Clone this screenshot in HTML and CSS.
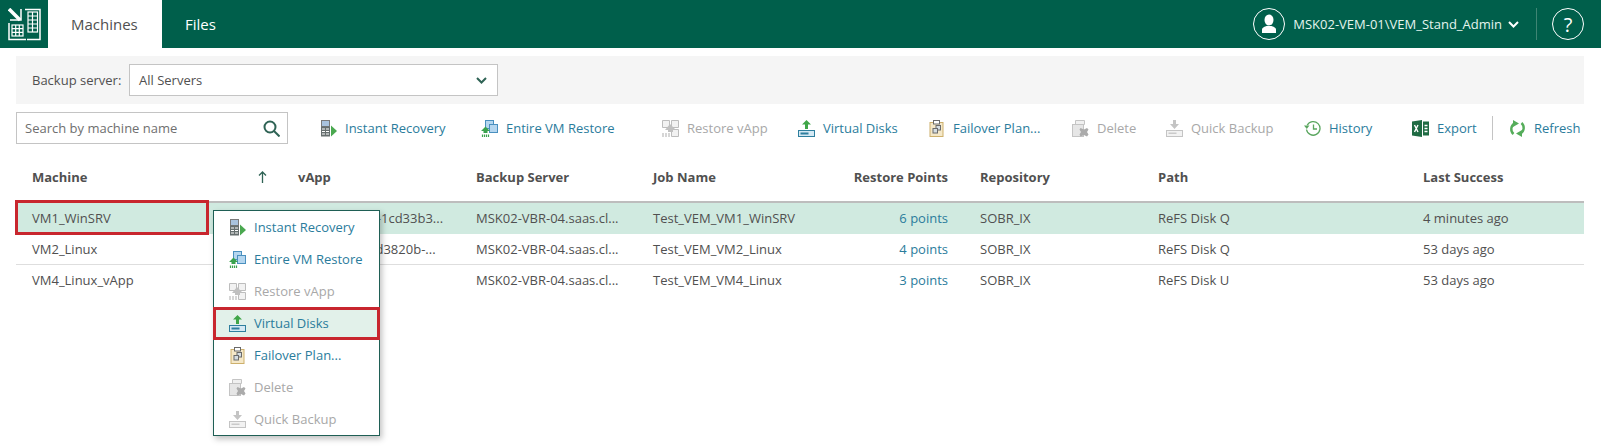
FILE: index.html
```html
<!DOCTYPE html>
<html lang="en">
<head>
    <meta charset="UTF-8">
    <title>Machines</title>
    <link rel="stylesheet" href="styles.css">
</head>
<body>
    <svg class="defs" width="0" height="0">
        <symbol id="i-instant" viewBox="0 0 17 17">
            <rect x="1.5" y="0.5" width="8" height="6" fill="#a9c3de" stroke="#7a7a7a"/>
            <rect x="1" y="6.5" width="9" height="10" fill="#666f6f"/>
            <path d="M2 9h3M6 9h3M2 11.5h3M6 11.5h3M2 14h3M6 14h3" stroke="#fff" stroke-width="1.2"/>
            <path d="M11 5.5l6 5.5-6 5.5z" fill="#4aa84f"/>
        </symbol>
        <symbol id="i-entire" viewBox="0 0 17 17">
            <rect x="4.5" y="0.5" width="8" height="8" fill="#b5d6ef" stroke="#4a90bf"/>
            <rect x="8.5" y="4.5" width="8" height="8" fill="#b5d6ef" stroke="#4a90bf"/>
            <path d="M4.5 6.5l4.5 4.5h-2.5v2h-4v-2h-2.5z" fill="#3aa24d"/>
            <path d="M1.5 14.5v2.5M3.5 14.5v2.5M5.5 14.5v2.5M7.5 14.5v2.5" stroke="#3aa24d" stroke-width="1.2"/>
        </symbol>
        <symbol id="i-vapp" viewBox="0 0 17 17">
            <path d="M0.5 0.5h7v7h-7zM9.5 0.5h7v7h-7zM9.5 9.5h7v7h-7z" fill="#f2f2f2" stroke="#bdbdbd"/>
            <path d="M8 4l5 5-2 1v2h-5v-2h-3z" fill="#c0c0c0"/>
            <path d="M1 13v4M4 13v4M7 13v4" stroke="#c0c0c0" stroke-width="1.3"/>
        </symbol>
        <symbol id="i-disks" viewBox="0 0 17 17">
            <path d="M8.5 0l4.5 4.5h-3v4.500h-3v-4.500h-3z" fill="#3fa648"/>
            <rect x="0.5" y="10.5" width="16" height="6" fill="#d5e9f4" stroke="#2e7f9e"/>
            <rect x="2.5" y="12.5" width="8" height="2" fill="#2e7f9e"/>
        </symbol>
        <symbol id="i-failover" viewBox="0 0 17 17">
            <rect x="2" y="2.5" width="13" height="14" fill="#f5e8c8" stroke="#cdb06c"/>
            <rect x="5.5" y="0.5" width="6" height="3.5" fill="#fff" stroke="#6a6a6a"/>
            <rect x="8" y="5.5" width="4.5" height="4.5" fill="#d5dde2" stroke="#6a6a6a"/>
            <rect x="5" y="8.5" width="4.5" height="4.5" fill="#d5dde2" stroke="#6a6a6a"/>
        </symbol>
        <symbol id="i-delete" viewBox="0 0 17 17">
            <path d="M3.5 0.5h9v4h-9z" fill="#f0f0f0" stroke="#c4c4c4"/>
            <rect x="0.5" y="4.5" width="11" height="12" fill="#e6e6e6" stroke="#c4c4c4"/>
            <path d="M8.5 8l3.5 1.500 3-1.500 1.500 1.500-1.500 2.500 1.500 2.500-1.500 2-3-1.500-3.500 1.500-1-2 1.500-2.500-1.500-2.500z" fill="#ababab"/>
        </symbol>
        <symbol id="i-quick" viewBox="0 0 17 17">
            <path d="M7 0h3v4h3l-4.500 5-4.500-5h3z" fill="#c4c4c4"/>
            <rect x="0.5" y="10.5" width="16" height="6" fill="#f2f2f2" stroke="#c4c4c4"/>
            <rect x="2.5" y="12.5" width="8" height="1.5" fill="#cacaca"/>
        </symbol>
        <symbol id="i-history" viewBox="0 0 17 17">
            <path d="M3.2 5.200a6.800 6.800 0 1 1-0.700 4.300" fill="none" stroke="#5aa65f" stroke-width="1.3"/>
            <path d="M0 5.500h5.500l-2.700 3.500z" fill="#5aa65f"/>
            <path d="M9.5 4.500v4.500h3.500" fill="none" stroke="#5aa65f" stroke-width="1.3"/>
        </symbol>
        <symbol id="i-export" viewBox="0 0 17 17">
            <path d="M0 1.500l10-1.500v17l-10-1.500z" fill="#1f6b43"/>
            <path d="M2.500 5l3.500 7M6 5l-3.500 7" stroke="#fff" stroke-width="1.4"/>
            <rect x="11" y="1.5" width="6" height="14" fill="#1f6b43"/>
            <path d="M12.500 5.500h3M12.500 8.500h3M12.500 11.500h3" stroke="#fff" stroke-width="1.4"/>
        </symbol>
        <symbol id="i-refresh" viewBox="0 0 17 17">
            <path d="M4.500 14A6.500 6.500 0 0 1 5.500 3.500" fill="none" stroke="#55ad5a" stroke-width="2.4"/>
            <path d="M4 0l6 3.500-6 3.500z" fill="#55ad5a"/>
            <path d="M12.500 3A6.500 6.500 0 0 1 11.500 13.500" fill="none" stroke="#55ad5a" stroke-width="2.4"/>
            <path d="M13 10v7l-6-3.500z" fill="#55ad5a"/>
        </symbol>
    </svg>

    <!-- Top bar -->
    <div class="topbar">
        <div class="logo">
            <svg width="33" height="33" viewBox="0 0 33 33" fill="none" stroke="#fff">
                <path d="M1 1l11 11" stroke-width="3.5"/>
                <path d="M13 1v11h-11" stroke-width="1.5"/>
                <path d="M17 1.500h15v30h-13" stroke-width="1.5"/>
                <path d="M1 15v16.500h17" stroke-width="1.5"/>
                <rect x="20" y="4" width="9.500" height="20" stroke-width="1.2"/>
                <path d="M20 8h9.500M20 12h9.500M20 16h9.500M20 20h9.500M24.500 4v20" stroke-width="1.2"/>
                <rect x="4" y="17" width="11" height="11" stroke-width="1.2"/>
                <path d="M4 20.700h11M4 24.300h11M7.700 17v11M11.300 17v11" stroke-width="1.2"/>
            </svg>
        </div>
        <div class="tab active">Machines</div>
        <div class="tab">Files</div>
        <div class="user">
            <span class="round-btn">
                <svg width="20" height="20" viewBox="0 0 20 20" fill="#fff">
                    <ellipse cx="10" cy="6" rx="4.500" ry="5.500"/>
                    <path d="M3 19v-3.500c0-2 3-3 4.500-3.500h5c1.500 0.500 4.500 1.500 4.500 3.500v3.500z"/>
                </svg>
            </span>
            <span class="user-name">MSK02-VEM-01\VEM_Stand_Admin</span>
            <svg class="user-caret" width="11" height="7" viewBox="0 0 11 7" fill="none" stroke="#fff" stroke-width="2"><path d="M1 1l4.500 4.500 4.500-4.500"/></svg>
        </div>
        <div class="help-sep"></div>
        <span class="round-btn help">?</span>
    </div>

    <div class="content">
        <!-- Filter -->
        <div class="filter">
            <label class="filter-label">Backup server:</label>
            <div class="select">
                <span>All Servers</span>
                <svg width="11" height="7" viewBox="0 0 11 7" fill="none" stroke="#2f6355" stroke-width="2"><path d="M1 1l4.500 4.500 4.500-4.500"/></svg>
            </div>
        </div>

        <!-- Toolbar -->
        <div class="toolbar">
            <div class="search">
                <span>Search by machine name</span>
                <svg width="17" height="17" viewBox="0 0 17 17" fill="none" stroke="#2f6355" stroke-width="2"><circle cx="7" cy="7" r="5.500"/><path d="M11 11l5.500 5.500"/></svg>
            </div>
            <div class="tool"><svg class="icon"><use href="#i-instant"/></svg>Instant Recovery</div>
            <div class="tool"><svg class="icon"><use href="#i-entire"/></svg>Entire VM Restore</div>
            <div class="tool off"><svg class="icon"><use href="#i-vapp"/></svg>Restore vApp</div>
            <div class="tool"><svg class="icon"><use href="#i-disks"/></svg>Virtual Disks</div>
            <div class="tool"><svg class="icon"><use href="#i-failover"/></svg>Failover Plan...</div>
            <div class="tool off"><svg class="icon"><use href="#i-delete"/></svg>Delete</div>
            <div class="tool off"><svg class="icon"><use href="#i-quick"/></svg>Quick Backup</div>
            <div class="tool"><svg class="icon"><use href="#i-history"/></svg>History</div>
            <div class="tool"><svg class="icon"><use href="#i-export"/></svg>Export</div>
            <div class="tool-sep"></div>
            <div class="tool"><svg class="icon"><use href="#i-refresh"/></svg>Refresh</div>
        </div>

        <!-- Grid -->
        <table class="grid">
            <colgroup>
                <col class="c-machine"><col class="c-vapp"><col class="c-server"><col class="c-job">
                <col class="c-points"><col class="c-repo"><col class="c-path"><col class="c-last">
            </colgroup>
            <thead>
                <tr>
                    <th class="sort-cell">Machine
                        <svg class="sort" width="9" height="12" viewBox="0 0 9 12" fill="none" stroke="#2f6355" stroke-width="1.3"><path d="M4.500 12v-11M1 4.500l3.500-3.500 3.500 3.500"/></svg>
                    </th>
                    <th>vApp</th>
                    <th>Backup Server</th>
                    <th>Job Name</th>
                    <th class="num">Restore Points</th>
                    <th>Repository</th>
                    <th>Path</th>
                    <th>Last Success</th>
                </tr>
            </thead>
            <tbody>
                <tr class="selected">
                    <td>VM1_WinSRV</td>
                    <td>a4f07be2-c9f-1cd33b3...</td>
                    <td>MSK02-VBR-04.saas.cl...</td>
                    <td>Test_VEM_VM1_WinSRV</td>
                    <td class="num link">6 points</td>
                    <td>SOBR_IX</td>
                    <td>ReFS Disk Q</td>
                    <td>4 minutes ago</td>
                </tr>
                <tr>
                    <td>VM2_Linux</td>
                    <td>57c1e09a4b-d3820b-...</td>
                    <td>MSK02-VBR-04.saas.cl...</td>
                    <td>Test_VEM_VM2_Linux</td>
                    <td class="num link">4 points</td>
                    <td>SOBR_IX</td>
                    <td>ReFS Disk Q</td>
                    <td>53 days ago</td>
                </tr>
                <tr class="last">
                    <td>VM4_Linux_vApp</td>
                    <td></td>
                    <td>MSK02-VBR-04.saas.cl...</td>
                    <td>Test_VEM_VM4_Linux</td>
                    <td class="num link">3 points</td>
                    <td>SOBR_IX</td>
                    <td>ReFS Disk U</td>
                    <td>53 days ago</td>
                </tr>
            </tbody>
        </table>
    </div>

    <!-- Context menu -->
    <ul class="menu">
        <li><svg class="icon"><use href="#i-instant"/></svg>Instant Recovery</li>
        <li><svg class="icon"><use href="#i-entire"/></svg>Entire VM Restore</li>
        <li class="off"><svg class="icon"><use href="#i-vapp"/></svg>Restore vApp</li>
        <li class="hover"><svg class="icon"><use href="#i-disks"/></svg>Virtual Disks</li>
        <li><svg class="icon"><use href="#i-failover"/></svg>Failover Plan...</li>
        <li class="off"><svg class="icon"><use href="#i-delete"/></svg>Delete</li>
        <li class="off"><svg class="icon"><use href="#i-quick"/></svg>Quick Backup</li>
    </ul>

    <!-- Red callouts -->
    <div class="callout callout-row"></div>
    <div class="callout callout-menu"></div>
</body>
</html>
```

FILE: styles.css
```css
* {
    margin: 0;
    padding: 0;
    box-sizing: border-box;
}
body {
    position: relative;
    width: 1601px;
    height: 448px;
    overflow: hidden;
    background-color: #fff;
    color: #505050;
    font-family: "Open Sans", sans-serif;
    font-size: 13px;
}
.defs {
    position: absolute;
}
.icon {
    width: 17px;
    height: 17px;
    flex: none;
}

/* Top bar */
.topbar {
    display: flex;
    align-items: center;
    height: 48px;
    background-color: #005f4b;
    color: #fff;
}
.logo {
    display: flex;
    align-items: center;
    justify-content: center;
    width: 48px;
    height: 48px;
}
.tab {
    display: flex;
    align-items: center;
    height: 48px;
    padding: 0 23px;
    font-size: 15px;
}
.tab.active {
    width: 114px;
    background-color: #fff;
    color: #505050;
}
.user {
    display: flex;
    align-items: center;
    margin-left: auto;
}
.round-btn {
    display: flex;
    align-items: center;
    justify-content: center;
    width: 32px;
    height: 32px;
    border: 1.5px solid #fff;
    border-radius: 50%;
}
.user-name {
    margin-left: 8px;
    font-size: 13px;
    color: #e4f5ee;
}
.user-caret {
    margin-left: 6px;
}
.help-sep {
    width: 1px;
    height: 32px;
    margin-left: 17px;
    background-color: #3f8574;
}
.help {
    margin: 0 17px 0 15px;
    font-size: 20px;
}

/* Filter */
.content {
    padding: 8px 17px 0 16px;
}
.filter {
    display: flex;
    align-items: center;
    height: 48px;
    padding-left: 16px;
    background-color: #f5f5f5;
}
.filter-label {
    width: 97px;
}
.select {
    display: flex;
    align-items: center;
    justify-content: space-between;
    width: 369px;
    height: 32px;
    padding: 0 10px 0 9px;
    background-color: #fff;
    border: 1px solid #c4c4c4;
}

/* Toolbar */
.toolbar {
    display: grid;
    grid-template-columns: 304px 161px 181px 136px 130px 144px 94px 138px 108px 80px 17px 75px;
    align-items: center;
    height: 32px;
    margin-top: 8px;
}
.search {
    display: flex;
    align-items: center;
    justify-content: space-between;
    width: 272px;
    height: 32px;
    padding: 0 7px 0 8px;
    border: 1px solid #c4c4c4;
    color: #6f6f6f;
}
.tool {
    display: flex;
    align-items: center;
    gap: 8px;
    color: #2a7c9c;
    white-space: nowrap;
}
.tool.off {
    color: #a8a8a8;
}
.tool-sep {
    width: 1px;
    height: 24px;
    background-color: #c4c4c4;
}

/* Grid */
.grid {
    width: 1568px;
    margin-top: 9px;
    table-layout: fixed;
    border-collapse: collapse;
}
.c-machine { width: 266px; }
.c-vapp { width: 178px; }
.c-server { width: 177px; }
.c-job { width: 183px; }
.c-points { width: 144px; }
.c-repo { width: 178px; }
.c-path { width: 265px; }
.c-last { width: 177px; }
.grid th {
    height: 49px;
    padding: 0 16px;
    text-align: left;
    font-weight: 700;
    border-bottom: 2px solid #bdbdbd;
}
.grid td {
    height: 31px;
    padding: 0 16px;
    white-space: nowrap;
    overflow: hidden;
    border-bottom: 1px solid #dedede;
}
.grid .num {
    text-align: right;
}
.grid .link {
    color: #2a7c9c;
}
.sort-cell {
    position: relative;
}
.sort {
    position: absolute;
    top: 18px;
    right: 15px;
}
.selected td {
    background-color: #d0eae0;
    border-bottom-color: #d0eae0;
}
.last td {
    border-bottom: none;
}

/* Context menu */
.menu {
    position: absolute;
    top: 210px;
    left: 213px;
    width: 167px;
    height: 226px;
    list-style: none;
    background-color: #fff;
    border: 1px solid #1f5f55;
    box-shadow: 2px 3px 6px rgba(0, 0, 0, 0.25);
}
.menu li {
    display: flex;
    align-items: center;
    gap: 8px;
    height: 32px;
    padding-left: 15px;
    color: #2a7c9c;
}
.menu li.off {
    color: #a8a8a8;
}
.menu li.hover {
    background-color: #e2f1ea;
}

/* Red callouts */
.callout {
    position: absolute;
    border: 3px solid #c8262e;
}
.callout-row {
    top: 200px;
    left: 15px;
    width: 194px;
    height: 35px;
}
.callout-menu {
    top: 307px;
    left: 213px;
    width: 167px;
    height: 33px;
}
```
